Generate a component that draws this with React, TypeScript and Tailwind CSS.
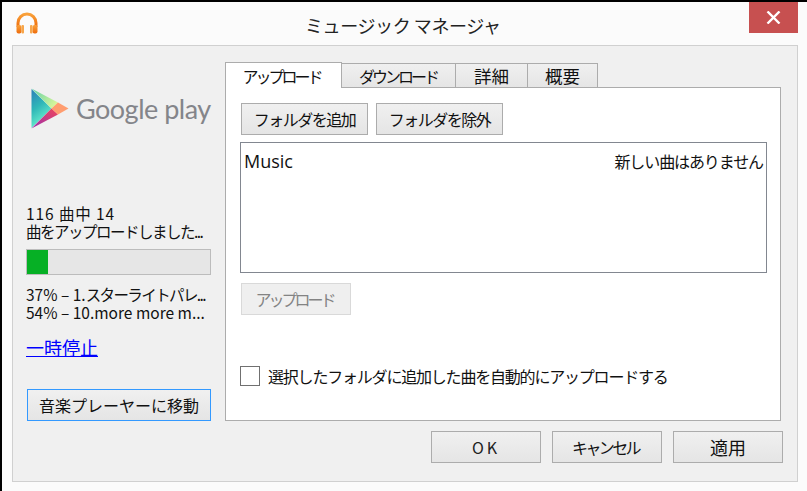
const btn =
  "flex items-center justify-center border bg-linear-to-b from-[#f0f0f0] to-[#e5e5e5] text-[16px] leading-none text-[#111]";
const tab =
  "flex h-[24px] items-center justify-center border border-l-0 border-b-0 border-[#acacac] bg-linear-to-b from-[#f0f0f0] to-[#e5e5e5]";

function Headphones() {
  return (
    <svg width="24" height="24" viewBox="0 0 24 24">
      <defs>
        <linearGradient id="hp" x1="0" y1="0" x2="0" y2="1">
          <stop offset="0" stopColor="#f9a13a" />
          <stop offset="1" stopColor="#ee6c0c" />
        </linearGradient>
      </defs>
      <path d="M3 16 V12 a9 9 0 0 1 18 0 V16" fill="none" stroke="url(#hp)" strokeWidth="3" />
      <rect x="1.5" y="14" width="5" height="8.5" rx="2" fill="url(#hp)" />
      <rect x="17.5" y="14" width="5" height="8.5" rx="2" fill="url(#hp)" />
      <rect x="6.5" y="14" width="2.5" height="8.5" rx="1" fill="#f7a64a" />
      <rect x="15" y="14" width="2.5" height="8.5" rx="1" fill="#f7a64a" />
    </svg>
  );
}

function PlayLogo() {
  return (
    <svg width="38" height="41" viewBox="0 0 38 41">
      <defs>
        <linearGradient id="pl" x1="0" y1="0" x2="0.4" y2="1">
          <stop offset="0" stopColor="#2a7fb8" />
          <stop offset="0.5" stopColor="#30b8b8" />
          <stop offset="1" stopColor="#70f5d0" />
        </linearGradient>
        <linearGradient id="pt" x1="0" y1="0" x2="1" y2="0.6">
          <stop offset="0" stopColor="#5fd0a8" />
          <stop offset="1" stopColor="#d5f59a" />
        </linearGradient>
        <linearGradient id="pb" x1="0" y1="1" x2="1" y2="0">
          <stop offset="0" stopColor="#9a30b0" />
          <stop offset="1" stopColor="#f0455a" />
        </linearGradient>
      </defs>
      <path d="M0.5 1 L20.5 20.5 L0.5 40 Z" fill="url(#pl)" />
      <path d="M0.5 0.5 L27 14.5 L20.5 20.5 Z" fill="url(#pt)" />
      <path d="M0.5 40.5 L20.5 20.5 L27 26.5 Z" fill="url(#pb)" />
      <path d="M20.5 20.5 L27 14.5 L37.5 20.5 L27 26.5 Z" fill="#ff9d70" />
    </svg>
  );
}

export default function App() {
  const font = { fontFamily: '"Noto Sans CJK JP", "Liberation Sans", sans-serif' };
  return (
    <div
      className="flex h-[491px] w-[807px] flex-col overflow-hidden border-t-2 border-l-2 border-black bg-[#fbfbfb] text-[#111]"
      style={font}
    >
      {/* title bar */}
      <div className="flex h-[43px] shrink-0 items-start">
        <div className="mt-[9px] ml-[13px] w-[24px]">
          <Headphones />
        </div>
        <div className="mt-[9px] ml-[266px] w-[200px] text-[18px] leading-[28px] tracking-[-0.4px] whitespace-nowrap text-[#222]">
          ミュージック マネージャ
        </div>
        <div className="ml-[244px] flex h-[31px] w-[49px] items-center justify-center bg-[#c75050]">
          <svg width="15" height="13" viewBox="0 0 15 13">
            <path d="M1.5 0.5 L13.5 12.5 M13.5 0.5 L1.5 12.5" stroke="#fff" strokeWidth="2.4" />
          </svg>
        </div>
      </div>

      {/* dialog body */}
      <div className="ml-[10px] flex h-[437px] w-[786px] flex-col border border-[#d0d0d0] bg-[#f0f0f0]">
        <div className="flex pt-[16px]">
          {/* left column */}
          <div className="flex w-[212px] flex-col pl-[13px] text-[15.5px] leading-[18px]">
            <div className="mt-[26px] flex h-[41px] items-center pl-[5px]">
              <PlayLogo />
              <span
                className="ml-[7px] text-[27px] leading-none tracking-[-0.5px] whitespace-nowrap text-[#84858a]"
                style={{ fontFamily: "Lato, sans-serif" }}
              >
                Google play
              </span>
            </div>
            <p className="mt-[75px] whitespace-nowrap">
              <span className="tracking-[0.9px]">116 曲中 14</span>
              <br />
              <span className="tracking-[-1.5px]">曲をアップロードしました...</span>
            </p>
            <div className="mt-[9px] h-[26px] w-[185px] border border-[#bcbcbc] bg-[#e6e6e6]">
              <div className="h-full w-[21px] bg-[#06b025]" />
            </div>
            <p className="mt-[10px] whitespace-nowrap">
              37% – 1.<span className="tracking-[-1.6px]">スターライトパレ...</span>
              <br />
              54% – 10.more more m...
            </p>
            <div className="mt-[17px] text-[18px] text-[#0000ff] underline">一時停止</div>
            <div className={`${btn} mt-[33px] ml-[1px] h-[32px] w-[184px] border-[#3399ff]`}>音楽プレーヤーに移動</div>
          </div>

          {/* tabs and page */}
          <div className="flex w-[556px] flex-col">
            <div className="flex h-[25px] items-end text-[16px] leading-none">
              <div className="relative z-10 -mb-px flex h-[26px] w-[117px] items-center justify-center border border-b-0 border-[#acacac] bg-white pr-[4px] tracking-[-3px]">
                アップロード
              </div>
              <div className={`${tab} w-[114px] pr-[1px] tracking-[-3px]`}>ダウンロード</div>
              <div className={`${tab} w-[72px] text-[17.5px]`}>詳細</div>
              <div className={`${tab} w-[70px] text-[17.5px]`}>概要</div>
            </div>
            <div className="flex h-[334px] flex-col border border-[#acacac] bg-white pt-[15px] pl-[15px]">
              <div className="flex gap-[8px]">
                <div className={`${btn} h-[32px] w-[127px] border-[#acacac] tracking-[-1.5px]`}>フォルダを追加</div>
                <div className={`${btn} h-[32px] w-[127px] border-[#acacac] tracking-[-1.5px]`}>フォルダを除外</div>
              </div>
              <div className="mt-[7px] -ml-px flex h-[131px] w-[527px] items-start justify-between border border-[#828790] bg-white px-[3px] pt-[7px] text-[16px] leading-[22px]">
                <span className="text-[18px]" style={{ fontFamily: '"Open Sans", "Noto Sans CJK JP", sans-serif' }}>
                  Music
                </span>
                <span className="tracking-[-1.1px]">新しい曲はありません</span>
              </div>
              <div className="mt-[10px] flex h-[32px] w-[110px] items-center justify-center border border-[#d9d9d9] bg-[#efefef] pr-[3px] text-[16px] leading-none tracking-[-3px] text-[#838383]">
                アップロード
              </div>
              <div className="mt-[51px] -ml-px flex items-center text-[16px] leading-none">
                <div className="h-[20px] w-[20px] border border-[#707070] bg-white" />
                <span className="ml-[8px] tracking-[-1.2px] whitespace-nowrap">
                  選択したフォルダに追加した曲を自動的にアップロードする
                </span>
              </div>
            </div>
          </div>
        </div>

        {/* bottom buttons */}
        <div className="mt-[10px] flex justify-end gap-[11px] pr-[14px]">
          <div className={`${btn} h-[32px] w-[110px] border-[#acacac] tracking-[3px] text-[#222]`}>OK</div>
          <div className={`${btn} h-[32px] w-[110px] border-[#acacac] pr-[3px] tracking-[-2.6px]`}>キャンセル</div>
          <div className={`${btn} h-[32px] w-[110px] border-[#acacac] text-[18px]`}>適用</div>
        </div>
      </div>
    </div>
  );
}
